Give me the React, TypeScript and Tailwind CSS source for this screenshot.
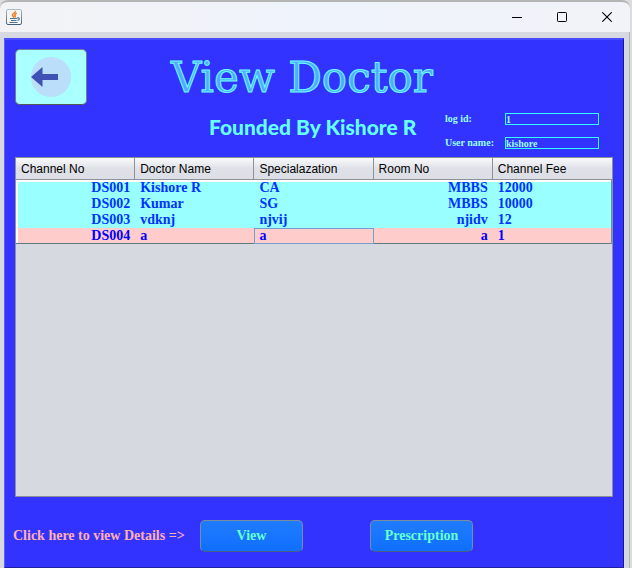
import React from "react";

const serif = "font-['Liberation_Serif',serif] font-bold";

const columns = ["Channel No", "Doctor Name", "Specialazation", "Room No", "Channel Fee"];

const doctors = [
  ["DS001", "Kishore R", "CA", "MBBS", "12000"],
  ["DS002", "Kumar", "SG", "MBBS", "10000"],
  ["DS003", "vdknj", "njvij", "njidv", "12"],
  ["DS004", "a", "a", "a", "1"],
];

const selectedRow = 3;
const focusedColumn = 2;

function JavaIcon() {
  return (
    <svg width="16" height="16" viewBox="0 0 16 16" aria-hidden="true">
      <defs>
        <linearGradient id="frame" x1="0" y1="0" x2="0" y2="1">
          <stop offset="0" stopColor="#a9bccb" />
          <stop offset="1" stopColor="#3f5f7a" />
        </linearGradient>
      </defs>
      <rect x="0.5" y="0.5" width="15" height="15" rx="1.5" fill="#f4f5f7" stroke="url(#frame)" />
      <path d="M9.4 2C9.8 4 6.2 4.400 6.400 6.100C6.600 7.100 7.800 7.300 7.600 8.600M10.800 4.300C8.800 5 8.300 6 9.200 6.800C9.600 7.400 9 8 8.600 8.400" fill="none" stroke="#ee7a1a" strokeWidth="1.500" />
      <path d="M4 9.500H11M5 11.500H10.500M3.500 13.500H11.500M11 9C14 8 13.800 11 11.500 11.300" fill="none" stroke="#4d7391" strokeWidth="1.200" />
    </svg>
  );
}

function TitleBar() {
  return (
    <header className="flex h-8 items-center justify-between rounded-t-lg border-t-2 border-[#b4b4b4] bg-gradient-to-r from-[#f3f3f6] via-[#eff3fb] to-[#f1f3f8] pr-[15px] pb-px pl-1.5">
      <JavaIcon />
      <div className="flex gap-[29px]">
        <button type="button" aria-label="Minimize" className="flex size-4 items-center justify-center">
          <svg width="10" height="10" viewBox="0 0 10 10" shapeRendering="crispEdges"><path d="M0 5.500H10" stroke="#000" /></svg>
        </button>
        <button type="button" aria-label="Maximize" className="flex size-4 items-center justify-center">
          <svg width="10" height="10" viewBox="0 0 10 10"><rect x="0.5" y="0.5" width="9" height="9" rx="0.8" fill="none" stroke="#000" /></svg>
        </button>
        <button type="button" aria-label="Close" className="flex size-4 items-center justify-center">
          <svg width="10" height="10" viewBox="0 0 10 10"><path d="M0.300 0.300L9.700 9.700M9.700 0.300L0.300 9.700" stroke="#000" strokeWidth="1.100" /></svg>
        </button>
      </div>
    </header>
  );
}

function BackButton() {
  return (
    <button
      type="button"
      aria-label="Back"
      className="flex h-14 w-[72px] shrink-0 items-center rounded-[5px] border border-[#6f7c9c] border-b-[#555] bg-[#aaffff] pl-[15px]"
    >
      <svg width="40" height="40" viewBox="0 0 40 40" aria-hidden="true">
        <circle cx="20" cy="20" r="20" fill="#bbdefb" />
        <path d="M0 20L11.500 10V17H27V23H11.500V30Z" fill="#3f51b5" />
      </svg>
    </button>
  );
}

function Field({ id, label, value }: { id: string; label: string; value: string }) {
  return (
    <div className={`flex items-center text-[10px] leading-3 text-[#99ffff] ${serif}`}>
      <label htmlFor={id} className="w-[60px]">{label}</label>
      <input
        id={id}
        defaultValue={value}
        className="h-3 w-[94px] border border-[#33ffff] bg-transparent text-[10px] leading-[10px] outline-none"
      />
    </div>
  );
}

function DoctorTable() {
  return (
    <table className="w-full table-fixed border-separate border-spacing-0">
      <thead>
        <tr>
          {columns.map((name) => (
            <th
              key={name}
              scope="col"
              className="h-[22px] border-r border-b border-[#8e9197] bg-gradient-to-b from-[#fafafb] via-[#dfe1e7] to-[#dcdfe6] p-0 pl-[5px] text-left font-['Liberation_Sans',sans-serif] text-xs font-normal text-black last:border-r-0"
            >
              {name}
            </th>
          ))}
        </tr>
      </thead>
      <tbody className={`text-sm leading-4 ${serif}`}>
        {doctors.map((row, r) => (
          <tr
            key={row[0]}
            className={[
              r === selectedRow ? "bg-[#ffcccc] text-[#0000ff]" : "bg-[#99ffff] text-[#0033ff]",
              r === 0 ? "shadow-[inset_0_2px_0_#fff,inset_2px_0_0_#fff]" : "",
              r > 0 && r < selectedRow ? "shadow-[inset_2px_0_0_#fff]" : "",
              r === selectedRow ? "shadow-[inset_0_-1px_0_#5f7d80,inset_2px_0_0_#fff]" : "",
            ].join(" ")}
          >
            {row.map((cell, c) => (
              <td
                key={c}
                className={[
                  "h-4 p-0 leading-4",
                  c === 0 || c === 3 ? "pr-[5px] text-right" : "pl-[5px] text-left",
                  c === 4 ? "border-r border-[#5f9a9c]" : "",
                  r === selectedRow && c === focusedColumn ? "outline outline-1 -outline-offset-1 outline-[#73a0d0]" : "",
                ].join(" ")}
              >
                {cell}
              </td>
            ))}
          </tr>
        ))}
      </tbody>
    </table>
  );
}

function ActionButton({ children }: { children: React.ReactNode }) {
  return (
    <button
      type="button"
      className={`h-8 w-[103px] rounded-[5px] border border-[#7b8ba0] border-b-[#4c5c80] bg-gradient-to-b from-[#1f7cff] to-[#0f6fff] text-sm text-[#66ffcc] ${serif}`}
    >
      {children}
    </button>
  );
}

export default function App() {
  return (
    <div className="flex min-h-screen flex-col bg-[#dcdcdc] pr-0.5">
      <TitleBar />
      <div className="flex flex-1 flex-col border-r border-[#b0b2b8] bg-[#d6d9df] pt-1.5 pr-[5px] pl-1">
        <main className="flex flex-1 flex-col border border-t-2 border-r-[#18188c] border-b-[#2020a0] border-l-[#5c5cff] border-t-[#4a4aff] bg-[#3333ff] px-2">
          <section className="flex px-0.5 pt-[9px] pb-2">
            <BackButton />
            <div className="flex-1 pl-[84px]">
              <h1 className="h-16 pt-2 font-['DejaVu_Serif',serif] text-[42px] leading-[42px] whitespace-nowrap text-[#55aaff] [-webkit-text-stroke:1px_#66ffff]">
                View Doctor
              </h1>
              <div className="flex justify-between pr-3.5">
                <h2 className="pt-0.5 pl-[38px] font-['Lato',sans-serif] text-[21px] leading-6 font-black whitespace-nowrap text-[#66ffff]">
                  Founded By Kishore R
                </h2>
                <div className="flex flex-col gap-3">
                  <Field id="log-id" label="log id:" value="1" />
                  <Field id="user-name" label="User name:" value="kishore" />
                </div>
              </div>
            </div>
          </section>
          <section className="mx-0.5 flex-1 border border-[#8d8f96] bg-[#d6d9df]">
            <DoctorTable />
          </section>
          <footer className="flex h-[70px] items-center pt-2">
            <span className={`w-[187px] text-sm whitespace-nowrap text-[#ffafaf] ${serif}`}>Click here to view Details =&gt;</span>
            <div className="flex gap-[67px]">
              <ActionButton>View</ActionButton>
              <ActionButton>Prescription</ActionButton>
            </div>
          </footer>
        </main>
      </div>
    </div>
  );
}
